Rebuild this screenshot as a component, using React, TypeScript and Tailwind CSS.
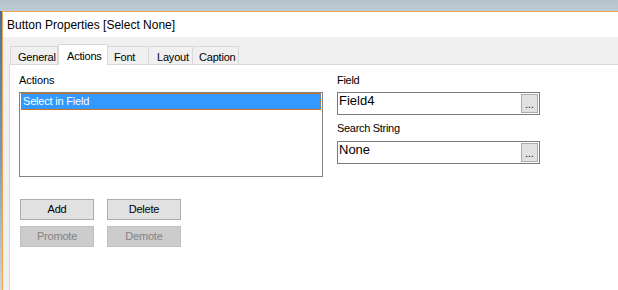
import React from 'react';

const tabs = [
  { label: 'General', w: 'w-[48px]', pl: 'pl-[7px]' },
  { label: 'Actions', w: 'w-[50px]', pl: 'pl-[8px]', active: true },
  { label: 'Font', w: 'w-[41px]', pl: 'pl-[6px]' },
  { label: 'Layout', w: 'w-[44px]', pl: 'pl-[8px]' },
  { label: 'Caption', w: 'w-[46px]', pl: 'pl-[6px]' },
];

function Btn({ label, disabled }: { label: string; disabled?: boolean }) {
  return (
    <div
      className={
        'w-[74px] h-[21px] flex items-center justify-center border text-[11px] tracking-[-0.2px] ' +
        (disabled
          ? 'bg-[#cccccc] border-[#bfbfbf] text-[#838383]'
          : 'bg-[#e1e1e1] border-[#adadad] text-black')
      }
    >
      {label}
    </div>
  );
}

function PickBox({ value }: { value: string }) {
  return (
    <div className="h-[23px] border border-[#7a7a7a] bg-white flex justify-between">
      <span className="pl-[1px] text-[13px] leading-[16px] text-black">{value}</span>
      <div className="mt-px mr-px w-[17px] h-[19px] bg-[#e1e1e1] border border-[#adadad] flex items-end justify-center">
        <span className="text-[10px] leading-[10px] pb-[2px] text-black">...</span>
      </div>
    </div>
  );
}

export default function App() {
  return (
    <div
      className="w-[618px] h-[290px] overflow-hidden flex flex-col bg-white"
      style={{ fontFamily: '"Liberation Sans", Arial, sans-serif' }}
    >
      <div className="h-[11px] shrink-0 bg-linear-to-b from-[#b3c2cd] to-[#bfcbd4]" />
      <div className="flex-1 flex min-h-0">
        <div className="w-[2px] shrink-0 bg-linear-to-b from-[#4d6e98] via-[#7896bd] to-[#d4d4d4]" />
        <div className="flex-1 flex flex-col border-l border-t border-[#eaa64a] bg-[#f0f0f0] min-w-0">
          {/* title bar */}
          <div className="h-[25px] shrink-0 bg-white flex items-center pl-[4px] text-[12px] text-black">
            Button Properties [Select None]
          </div>

          {/* tab strip */}
          <div className="h-[27px] shrink-0 pt-[7px] pl-[7px] flex items-end">
            {tabs.map((t) =>
              t.active ? (
                <div
                  key={t.label}
                  className={`${t.w} ${t.pl} h-[21px] -mb-px relative z-10 bg-white border border-b-0 border-[#d9d9d9] text-[11px] tracking-[-0.2px] text-black pt-[3px]`}
                >
                  {t.label}
                </div>
              ) : (
                <div
                  key={t.label}
                  className={`${t.w} ${t.pl} h-[18px] border-t border-r border-[#d9d9d9] first:border-l text-[11px] tracking-[-0.2px] text-black pt-[2px]`}
                >
                  {t.label}
                </div>
              )
            )}
          </div>

          {/* tab page */}
          <div className="flex-1 ml-[6px] bg-white border-l border-t border-[#d9d9d9] pl-[9px] pt-[8px]">
            <div className="flex">
              <div className="w-[304px]">
                <div className="h-[14px] text-[11px] leading-[14px] tracking-[-0.1px] text-black">Actions</div>
                <div className="mt-[5px] h-[85px] border border-[#828282] bg-white px-px">
                  <div className="h-[17px] bg-[#3399ff] border border-dotted border-[#cc6a1e] pl-[1px] text-[11px] leading-[15px] tracking-[-0.2px] text-white">
                    Select in Field
                  </div>
                </div>
              </div>
              <div className="ml-[14px] w-[203px]">
                <div className="h-[14px] text-[11px] leading-[14px] tracking-[-0.3px] text-black">Field</div>
                <div className="mt-[5px]">
                  <PickBox value="Field4" />
                </div>
                <div className="mt-[6px] h-[14px] text-[11px] leading-[14px] tracking-[-0.3px] text-black">
                  Search String
                </div>
                <div className="mt-[6px]">
                  <PickBox value="None" />
                </div>
              </div>
            </div>

            <div className="mt-[22px] ml-px flex flex-col gap-[6px]">
              <div className="flex gap-[13px]">
                <Btn label="Add" />
                <Btn label="Delete" />
              </div>
              <div className="flex gap-[13px]">
                <Btn label="Promote" disabled />
                <Btn label="Demote" disabled />
              </div>
            </div>
          </div>
        </div>
      </div>
    </div>
  );
}
